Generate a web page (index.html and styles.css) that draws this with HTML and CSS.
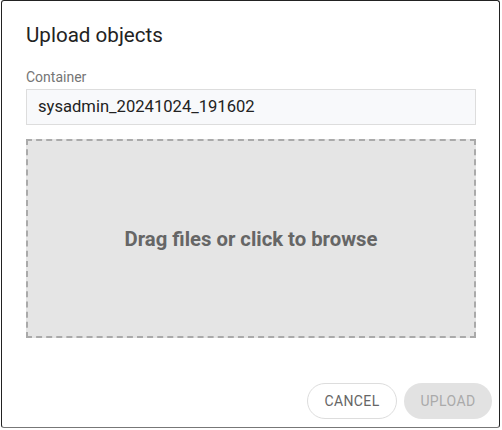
FILE: index.html
```html
<!DOCTYPE html>
<html>
<head>
<meta charset="utf-8">
<link rel="stylesheet" href="styles.css">
</head>
<body>
<div class="dialog">
  <h1 class="title">Upload objects</h1>
  <div class="field">
    <label class="label">Container</label>
    <div class="input">sysadmin_20241024_191602</div>
  </div>
  <div class="dropzone">Drag files or click to browse</div>
  <div class="footer">
    <button class="btn btn-cancel">CANCEL</button>
    <button class="btn btn-upload">UPLOAD</button>
  </div>
</div>
</body>
</html>
```
FILE: styles.css
```css
html, body {
  margin: 0;
  padding: 0;
  background: #fff;
}
body {
  font-family: Roboto, "Liberation Sans", sans-serif;
}
.dialog {
  box-sizing: border-box;
  margin-left: 1px;
  width: 499px;
  height: 428px;
  border: 1px solid #222;
  border-bottom-color: #777;
  border-radius: 3px;
  background: #fff;
  display: flex;
  flex-direction: column;
  padding: 22px 7px 8px 24px;
}
.title {
  margin: 0;
  font-size: 20.6px;
  line-height: 24px;
  font-weight: 400;
  color: #222;
}
.field {
  margin-top: 22px;
  margin-right: 16px;
  display: flex;
  flex-direction: column;
}
.label {
  font-size: 14px;
  line-height: 16px;
  color: #757575;
  margin-bottom: 4px;
}
.input {
  box-sizing: border-box;
  height: 36px;
  border: 1px solid #ddd;
  background: #f8f9fb;
  padding-left: 11px;
  font-size: 16.6px;
  line-height: 34px;
  color: #222;
}
.dropzone {
  box-sizing: border-box;
  margin-top: 14px;
  margin-right: 16px;
  height: 199px;
  border: 2px dashed #aaa;
  background: #e5e5e5;
  display: flex;
  align-items: center;
  justify-content: center;
  font-size: 20.3px;
  font-weight: 700;
  color: #666;
}
.footer {
  margin-top: auto;
  display: flex;
  justify-content: flex-end;
  gap: 7px;
}
.btn {
  box-sizing: border-box;
  height: 36px;
  border-radius: 18px;
  font-family: Roboto, "Liberation Sans", sans-serif;
  font-size: 14px;
  letter-spacing: 0.4px;
  padding: 0;
}
.btn-cancel {
  width: 90px;
  border: 1px solid #ddd;
  background: #fff;
  color: #666;
}
.btn-upload {
  width: 88px;
  border: none;
  background: #e2e2e2;
  color: #aaa;
}
```
